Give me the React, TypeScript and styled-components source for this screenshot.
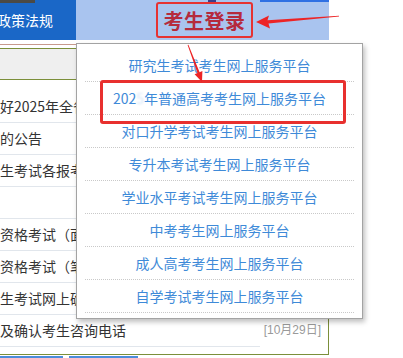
import styled, { createGlobalStyle } from "styled-components";

const GlobalStyle = createGlobalStyle`
  html, body {
    margin: 0;
    padding: 0;
    background: #fff;
  }
  body {
    width: 403px;
    height: 358px;
    overflow: hidden;
    font-family: "Noto Sans CJK SC", "Noto Sans", sans-serif;
  }
`;

const NEWS = [
  { title: "好2025年全省普通高校招生考试工作的通知", date: "[11月03日]" },
  { title: "的公告", date: "[11月01日]" },
  { title: "生考试各报考点联系方式一览表", date: "[10月31日]" },
  { title: "", date: "[10月31日]" },
  { title: "资格考试（面试）报名公告", date: "[10月30日]" },
  { title: "资格考试（笔试）报名公告", date: "[10月30日]" },
  { title: "生考试网上确认须知", date: "[10月29日]" },
  { title: "及确认考生咨询电话", date: "[10月29日]" },
];

const PLATFORMS = [
  "研究生考试考生网上服务平台",
  "2025年普通高考考生网上服务平台",
  "对口升学考试考生网上服务平台",
  "专升本考试考生网上服务平台",
  "学业水平考试考生网上服务平台",
  "中考考生网上服务平台",
  "成人高考考生网上服务平台",
  "自学考试考生网上服务平台",
];

export default function App() {
  return <>
    <GlobalStyle />
    <Page>
      <NavBar>
        <NavDark>政策法规</NavDark>
        <NavLight>
          <LoginTitle>考生登录</LoginTitle>
        </NavLight>
      </NavBar>

      <NewsPanel>
        <TabHeader />
        <NewsList>
          {NEWS.map((n, i) =>
            <NewsRow key={i}>
              <NewsTitle>{n.title}</NewsTitle>
              <NewsDate>{n.date}</NewsDate>
            </NewsRow>
          )}
        </NewsList>
      </NewsPanel>

      <BottomTabs>
        <BottomTab w={63} />
        <BottomTab w={69} />
      </BottomTabs>

      <Dropdown>
        {PLATFORMS.map((p, i) =>
          <DropItem key={i}>
            {i === 1
              ? <>202<Smudge>5</Smudge>年普通高考考生网上服务平台</>
              : p}
          </DropItem>
        )}
      </Dropdown>

      <Highlight />

      <Arrows width="403" height="358" viewBox="0 0 403 358">
        <polygon
          fill="#ec2426"
          points="256,22 269,15.5 267.5,20.2 339,15.7 339,16.4 268.5,23.6 270,28.5"
        />
        <polygon
          fill="#ec2426"
          points="202,82 202.4,71 199.6,72.2 188.4,44.8 187.6,45.1 197.4,73.1 194.6,74.2"
        />
      </Arrows>
    </Page>
  </>;
}

const Page = styled.div`
  position: relative;
  width: 403px;
  height: 358px;
  overflow: hidden;
`;

const NavBar = styled.div`
  display: flex;
  height: 40px;
`;

const NavDark = styled.div`
  width: 76px;
  display: flex;
  align-items: center;
  justify-content: flex-end;
  padding-right: 23px;
  box-sizing: border-box;
  white-space: nowrap;
  color: #fff;
  font-size: 14px;
  background:
    linear-gradient(#4b4a46, #4b4a46) 0 0 / 35px 3px no-repeat,
    #1a67c7;
`;

const NavLight = styled.div`
  width: 253px;
  display: flex;
  align-items: center;
  background:
    linear-gradient(#2f70e3, #2f70e3) 184px 0 / 69px 2px no-repeat,
    linear-gradient(#3a3f8c, #3a3f8c) 132px 0 / 8px 2px no-repeat,
    #a9c4ef;
`;

const LoginTitle = styled.div`
  margin-left: 80px;
  width: 97px;
  height: 36px;
  box-sizing: border-box;
  border: 2px solid #e63232;
  border-radius: 3px;
  display: flex;
  align-items: center;
  justify-content: center;
  color: #b52a3d;
  font-size: 20px;
  font-weight: 700;
  letter-spacing: 0.5px;
`;

const NewsPanel = styled.div`
  margin: 4px 0 0 -3px;
  width: 331px;
  padding-top: 3px;
  padding-bottom: 7px;
  border-top: 1px solid #c79a8d;
  border-right: 1px solid #7b8f3a;
  border-bottom: 1px solid #7b8f3a;
`;

const TabHeader = styled.div`
  height: 30px;
  background: #efefef;
  border-top: 1px solid #7b8f3a;
  border-bottom: 1px solid #7b8f3a;
`;

const NewsList = styled.div`
  padding-top: 11px;
`;

const NewsRow = styled.div`
  display: flex;
  height: 32px;
`;

const NewsTitle = styled.div`
  flex: 1;
  min-width: 0;
  padding-left: 3px;
  border-bottom: 1px solid #e1e6ec;
  color: #333;
  font-size: 14px;
  line-height: 31px;
  white-space: nowrap;
  overflow: hidden;
`;

const NewsDate = styled.div`
  flex: none;
  width: 68px;
  padding-right: 7px;
  box-sizing: border-box;
  text-align: right;
  white-space: nowrap;
  color: #9a9a9a;
  font-size: 12px;
  line-height: 31px;
  font-family: "Liberation Sans", "Noto Sans CJK SC", sans-serif;
`;

const BottomTabs = styled.div`
  display: flex;
  gap: 6px;
  margin-top: 1px;
`;

const BottomTab = styled.div<{ w: number }>`
  width: ${p => p.w}px;
  height: 10px;
  background: #4a8cdb;
`;

const Dropdown = styled.div`
  position: absolute;
  left: 76px;
  top: 43px;
  width: 287px;
  box-sizing: border-box;
  padding: 5px 8px;
  background: #fff;
  border: 1px solid #a3a3a3;
  box-shadow: 2px 3px 5px rgba(0, 0, 0, 0.25);
`;

const DropItem = styled.div`
  height: 32px;
  line-height: 32px;
  border-bottom: 1px dotted #c9c9c9;
  text-align: center;
  color: #3e8ad8;
  font-size: 14px;
  white-space: nowrap;
`;

const Smudge = styled.span`
  color: #d6e6f8;
  filter: blur(1.2px);
`;

const Highlight = styled.div`
  position: absolute;
  left: 100px;
  top: 80px;
  width: 246px;
  height: 44px;
  box-sizing: border-box;
  border: 3px solid #e8302e;
  border-radius: 3px;
`;

const Arrows = styled.svg`
  position: absolute;
  left: 0;
  top: 0;
  pointer-events: none;
`;
